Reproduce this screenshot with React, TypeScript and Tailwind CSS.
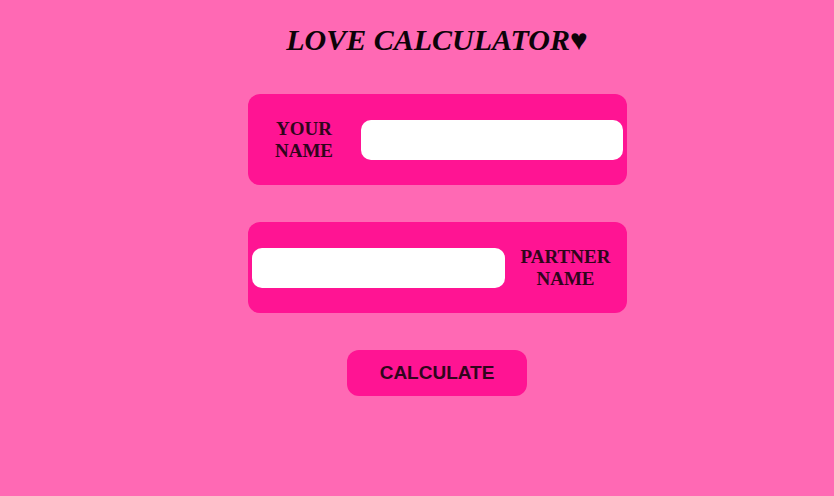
const cardClass = "flex h-[91px] w-[379px] max-w-full items-center rounded-xl bg-[#ff1493] px-1";
const labelClass = "flex-1 text-center text-[19px] leading-[22px] font-bold";
const inputClass = "h-10 min-w-0 rounded-[10px] bg-white px-3 text-[19px] outline-none";

export default function App() {
  return (
    <main className="min-h-screen bg-[#ff69b4] pt-[22px] pl-10 font-['Liberation_Serif',serif] text-[#30051c]">
      <form className="flex flex-col items-center gap-[37px]" onSubmit={(e) => e.preventDefault()}>
        <h1 className="text-[30px] leading-[35px] font-bold text-[#0d0309] italic">
          LOVE CALCULATOR<span className="not-italic">♥</span>
        </h1>
        <div className={cardClass}>
          <label htmlFor="your-name" className={`${labelClass} pr-6 pl-5`}>
            YOUR NAME
          </label>
          <input id="your-name" type="text" className={`${inputClass} w-[262px]`} />
        </div>
        <div className={cardClass}>
          <input id="partner-name" type="text" className={`${inputClass} w-[253px]`} />
          <label htmlFor="partner-name" className={`${labelClass} pl-1`}>
            PARTNER NAME
          </label>
        </div>
        <button
          type="submit"
          className="h-[46px] w-[180px] rounded-xl bg-[#ff1493] font-['Liberation_Sans',sans-serif] text-[19px] font-bold"
        >
          CALCULATE
        </button>
      </form>
    </main>
  );
}
